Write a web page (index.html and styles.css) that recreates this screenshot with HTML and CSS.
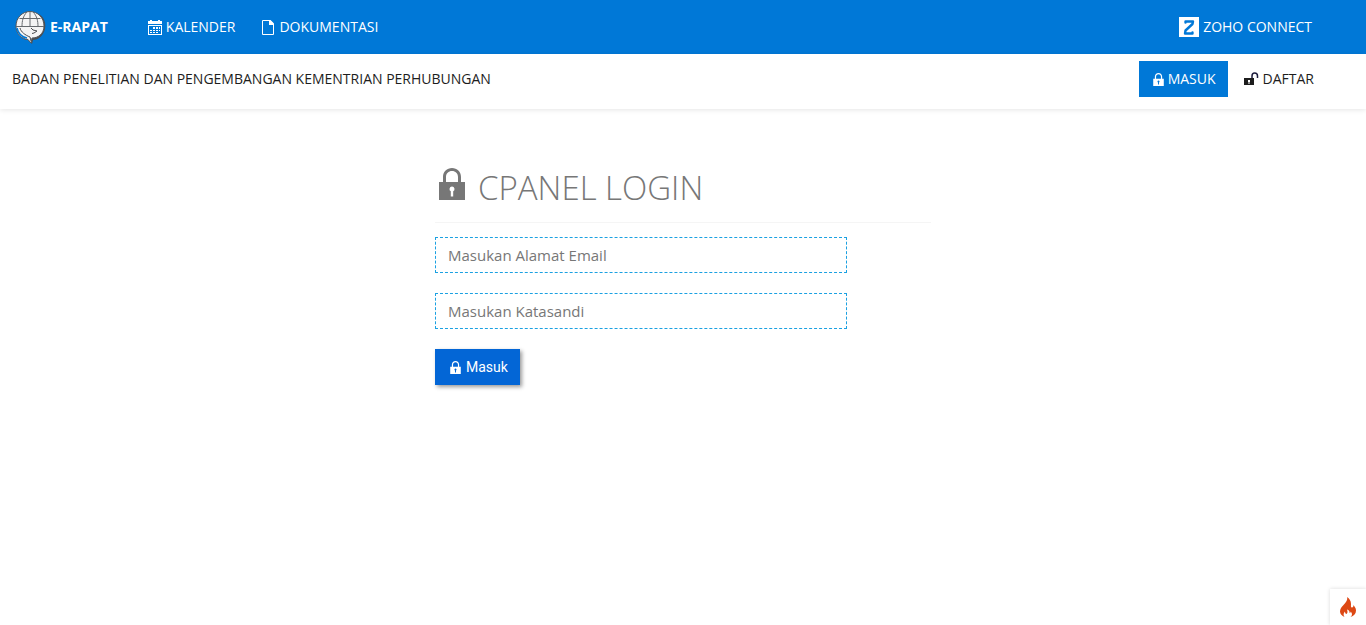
FILE: index.html
```html
<!DOCTYPE html>
<html lang="id">
<head>
<meta charset="utf-8">
<meta name="viewport" content="width=device-width, initial-scale=1">
<title>E-RAPAT</title>
<link rel="stylesheet" href="styles.css">
</head>
<body>
<svg class="symbols" aria-hidden="true">
  <symbol id="lock" viewBox="0 0 26 32">
    <path fill="currentColor" fill-rule="evenodd" d="M0 14H4V9C4 3.500 8 0 13 0S22 3.500 22 9V14H26V32H0ZM7 14H19V9C19 5.500 16.500 3 13 3S7 5.500 7 9ZM13 18.500A2.500 2.500 0 0 0 11.800 23.200V28.500H14.200V23.200A2.500 2.500 0 0 0 13 18.500Z"/>
  </symbol>
</svg>
<header class="topbar">
  <a class="brand" href="#">
    <svg class="brand-logo" viewBox="0 0 32 34" aria-hidden="true">
      <path fill="#4b4d50" d="M17 3C26 2 32 10 30 19C28 27 22 30 18 30L17 34L13 30C8 30 2 25 2 18Z"/>
      <path fill="#f4f4f4" stroke="#55585c" d="M1 16C1 8 7 1.500 15 1.500S29 8 29 16C29 24 23 28 17 28L16 33L13 29.500C6 29 1 23 1 16Z"/>
      <path fill="none" stroke="#666a6e" d="M1 16.500H29M4.500 8.500H25.500M15 1.500V16.500M12 2C8 6 7 11 7 16.500M18 2C22 6 23 11 23 16.500"/>
      <path fill="none" stroke="#0078d7" stroke-width="1.500" d="M2 18C3 23 7 27 12 28"/>
      <path fill="none" stroke="#4b4d50" d="M5 18C6 22 10 25 15 27L16 31M16 18L18 20L22 21L19 23L17 23.500"/>
    </svg>
    <span>E-RAPAT</span>
  </a>
  <nav class="topnav">
    <a class="nav-link" href="#">
      <svg class="icon-nav" viewBox="0 0 14 15" aria-hidden="true">
        <path fill="#fff" fill-rule="evenodd" d="M0 1H2V0H4V1H10V0H12V1H14V4H0ZM0 5H14V15H0ZM1 6V14H13V6Z"/>
        <path fill="#fff" d="M5 7h2v2H5zM8 7h2v2H8zM11 7h1v2h-1zM2 10h2v1H2zM5 10h2v1H5zM8 10h2v1H8zM11 10h1v1h-1zM2 12h2v1H2zM5 12h2v1H5zM8 12h2v1H8z"/>
      </svg>
      <span>KALENDER</span>
    </a>
    <a class="nav-link" href="#">
      <svg class="icon-nav" viewBox="0 0 14 15" aria-hidden="true">
        <path fill="none" stroke="#fff" d="M1.500 .5H9L12.500 4V14.500H1.500Z"/>
        <path fill="#fff" d="M8 0H9.500L13 3.500V5H8Z"/>
      </svg>
      <span>DOKUMENTASI</span>
    </a>
  </nav>
  <a class="zoho" href="#">
    <svg class="zoho-logo" viewBox="0 0 20 20" aria-hidden="true">
      <path fill="#fff" d="M0 0H20V20H0Z"/>
      <path fill="none" stroke="#0078d7" stroke-width="2.400" stroke-linecap="round" stroke-linejoin="round" d="M6.500 5.500V4.500H14L13.500 7L6.500 13.500L6 16.500H13.500V15.500"/>
    </svg>
    <span>ZOHO CONNECT</span>
  </a>
</header>
<div class="subbar">
  <div class="agency">BADAN PENELITIAN DAN PENGEMBANGAN KEMENTRIAN PERHUBUNGAN</div>
  <nav class="account">
    <a class="account-link active" href="#"><svg class="icon-lock" aria-hidden="true"><use href="#lock"/></svg><span>MASUK</span></a>
    <a class="account-link" href="#">
      <svg class="icon-unlock" viewBox="0 0 15 14" aria-hidden="true">
        <path fill="#1d1d1d" fill-rule="evenodd" d="M0 6H10V13H0ZM4 8V10H4.500V12H5.500V10H6V8Z"/>
        <path fill="none" stroke="#1d1d3d" stroke-width="1.500" d="M8 6V4C8 2 9 1 10.700 1S13.500 2 13.500 4V6"/>
      </svg>
      <span>DAFTAR</span>
    </a>
  </nav>
</div>
<main class="login">
  <h1 class="login-title"><svg class="icon-title" aria-hidden="true"><use href="#lock"/></svg><span>CPANEL LOGIN</span></h1>
  <form class="login-form">
    <input class="field" type="email" placeholder="Masukan Alamat Email" aria-label="Alamat Email">
    <input class="field" type="password" placeholder="Masukan Katasandi" aria-label="Katasandi">
    <button class="submit" type="button"><svg class="icon-lock" aria-hidden="true"><use href="#lock"/></svg><span>Masuk</span></button>
  </form>
</main>
<button class="debug" type="button" aria-label="Debug">
  <svg class="flame" viewBox="0 0 16 20" aria-hidden="true">
    <path fill="#dd4814" d="M7 0C8 3 6 5 3.500 8C1.500 10 0 12 0 14.500C0 17 2 19 4.500 20C3 18 3.500 16 5 14.500C5 16 5.500 17 6.500 17C8 16 7.500 14 7 12.500C9 13 10 14.500 9.500 16C10.500 16 10.800 15 10.500 14.500C12.500 16 12.500 18.500 10.500 20C14 19 16 16.500 16 13.500C16 11 14.500 9.500 13.500 8C13.500 9.500 13 10.500 12 10.500C10.500 10.500 11 8.500 11 7C11 4 9.500 1.500 7 0Z"/>
  </svg>
</button>
</body>
</html>
```
FILE: styles.css
```css
* { box-sizing: border-box; }
body {
  margin: 0;
  background: #fff;
  color: #1d1d1d;
  font: 14px/20px "Segoe UI", "Open Sans", "Noto Sans", sans-serif;
}
a { color: inherit; text-decoration: none; }
.symbols { display: none; }
.topbar {
  display: flex;
  align-items: center;
  height: 54px;
  padding: 0 54px 0 15px;
  background: #0078d7;
  color: #fff;
}
.brand { display: flex; align-items: center; gap: 3px; font-weight: 700; }
.brand-logo { width: 32px; height: 34px; }
.topnav { display: flex; gap: 26px; margin-left: 40px; }
.nav-link, .zoho { display: flex; align-items: center; gap: 4px; }
.icon-nav { width: 14px; height: 15px; }
.zoho { margin-left: auto; }
.zoho-logo { width: 20px; height: 20px; }
.subbar {
  display: flex;
  align-items: flex-start;
  justify-content: space-between;
  height: 55px;
  padding: 7px 52px 0 12px;
  box-shadow: 0 1px 5px rgba(0, 0, 0, .1);
}
.agency { padding-top: 8px; font-weight: 500; }
.account { display: flex; gap: 16px; }
.account-link { display: flex; align-items: center; gap: 4px; height: 36px; }
.account-link.active { padding: 0 12px 0 14px; background: #0078d7; color: #fff; }
.icon-lock { width: 11px; height: 13px; }
.icon-unlock { width: 15px; height: 14px; }
.login { width: 100%; max-width: 496px; margin: 0 auto; padding: 57px 0 40px; }
.login-title {
  display: flex;
  align-items: baseline;
  gap: 13px;
  height: 57px;
  margin: 0 0 14px;
  padding: 0 4px 12px;
  border-bottom: 1px solid #f5f5f5;
  color: #777;
  font-size: 33px;
  font-weight: 300;
  line-height: 44px;
}
.icon-title { width: 26px; height: 32px; }
.login-form { display: flex; flex-direction: column; align-items: flex-start; gap: 20px; }
.field {
  width: 83%;
  height: 36px;
  padding: 0 12px;
  border: 1px dashed #1ba1e2;
  background: #fff;
  color: #1d1d1d;
  font: 15px/20px "Segoe UI", "Open Sans", "Noto Sans", sans-serif;
}
.field::placeholder { color: #777; opacity: 1; }
.submit {
  display: flex;
  align-items: center;
  gap: 5px;
  height: 36px;
  padding: 0 12px 0 15px;
  border: 0;
  background: #0366d6;
  color: #fff;
  font: 14px/20px Roboto, sans-serif;
  box-shadow: 2px 2px 4px rgba(0, 0, 0, .4);
}
.debug {
  position: fixed;
  right: 0;
  bottom: 0;
  display: flex;
  align-items: center;
  justify-content: center;
  width: 36px;
  height: 36px;
  padding: 0;
  border: 0;
  background: #fff;
  box-shadow: 0 0 4px rgba(0, 0, 0, .15);
}
.flame { width: 16px; height: 20px; }
```
